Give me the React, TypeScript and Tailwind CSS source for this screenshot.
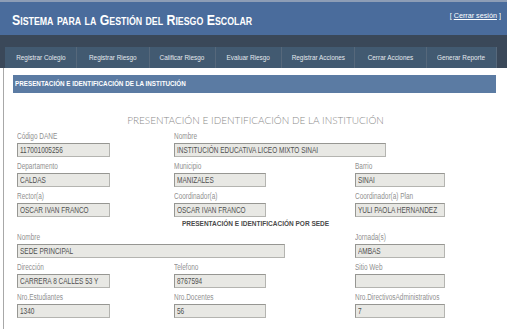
const navItems = [
  { label: "Registrar Colegio", w: "w-[72px]" },
  { label: "Registrar Riesgo", w: "w-[73px]" },
  { label: "Calificar Riesgo", w: "w-[66px]" },
  { label: "Evaluar Riesgo", w: "w-[66px]" },
  { label: "Registrar Acciones", w: "w-[73px]" },
  { label: "Cerrar Acciones", w: "w-[72px]" },
  { label: "Generar Reporte", w: "w-[70px]" },
]

const sans = "font-['Liberation_Sans',Arial,sans-serif]"

function Field({ label, value, width }: { label: string; value: string; width: string }) {
  return (
    <div className="flex flex-col">
      <span className={`h-[14px] whitespace-nowrap text-[8.5px] leading-[14px] text-[#909090] ${sans}`}>
        <span className="inline-block origin-left scale-x-[0.76]">{label}</span>
      </span>
      <div
        className={`h-[14px] ${width} overflow-hidden whitespace-nowrap border border-[#b4b4b0] border-t-[#969692] border-l-[#969692] bg-[#e8e8e4] px-[2px] text-[9px] leading-[12px] text-[#505050] ${sans}`}
      >
        <span className="inline-block origin-left scale-x-[0.72]">{value}</span>
      </div>
    </div>
  )
}

export default function App() {
  return (
    <div className="h-[329px] w-[507px] overflow-hidden bg-white">
      <header className="flex h-[35px] items-start justify-between border-t-2 border-[#8d9db6] bg-[#4a6c9c] pl-[12px] pr-[6px]">
        <h1
          className={`mt-[10px] whitespace-nowrap text-[14px] font-bold leading-[16px] text-white [font-variant:small-caps] ${sans}`}
        >
          <span className="inline-block origin-left scale-x-[0.88]">Sistema para la Gestión del Riesgo Escolar</span>
        </h1>
        <a className={`mt-[9px] whitespace-nowrap text-[8px] leading-[10px] text-white ${sans}`}>
          <span className="inline-block origin-right scale-x-[0.9]">
            [ <span className="underline">Cerrar sesión</span> ]
          </span>
        </a>
      </header>

      <nav className="flex bg-[#3a4859] pl-[5px] pr-[10px] pt-[12px]">
        {navItems.map((item) => (
          <div
            key={item.label}
            className={`flex h-[21px] ${item.w} items-center justify-center whitespace-nowrap border-r border-[#56687b] bg-[#425a71] text-[8px] text-[#e4e9ef] ${sans}`}
          >
            <span className="inline-block scale-x-[0.8]">{item.label}</span>
          </div>
        ))}
      </nav>

      <main className="ml-[3px] h-[261px] border-l border-[#a8a8a8] pt-[7px]">
        <div className="ml-[9px] flex h-[18px] w-[483px] items-center bg-[#5b7ba3] px-[2px]">
          <span className={`whitespace-nowrap text-[7.5px] font-bold text-white ${sans}`}>
            <span className="inline-block origin-left scale-x-[0.84]">
              PRESENTACIÓN E IDENTIFICACIÓN DE LA INSTITUCIÓN
            </span>
          </span>
        </div>

        <h2 className="mt-[19px] h-[17px] whitespace-nowrap text-center font-['Lato',sans-serif] text-[10px] font-light leading-[17px] text-[#8a8a8a]">
          PRESENTACIÓN E IDENTIFICACIÓN DE LA INSTITUCIÓN
        </h2>

        <div className="pl-[13px]">
          <div className="grid grid-cols-[157px_181px_1fr]">
            <Field label="Código DANE" value="117001005256" width="w-[93px]" />
            <div className="col-span-2">
              <Field label="Nombre" value="INSTITUCIÓN EDUCATIVA LICEO MIXTO SINAI" width="w-[212px]" />
            </div>
          </div>
          <div className="mt-[2px] grid grid-cols-[157px_181px_1fr]">
            <Field label="Departamento" value="CALDAS" width="w-[93px]" />
            <Field label="Municipio" value="MANIZALES" width="w-[92px]" />
            <Field label="Barrio" value="SINAI" width="w-[90px]" />
          </div>
          <div className="mt-[2px] grid grid-cols-[157px_181px_1fr]">
            <Field label="Rector(a)" value="OSCAR IVAN FRANCO" width="w-[93px]" />
            <Field label="Coordinador(a)" value="OSCAR IVAN FRANCO" width="w-[92px]" />
            <Field label="Coordinador(a) Plan" value="YULI PAOLA HERNANDEZ" width="w-[90px]" />
          </div>

          <p
            className={`h-[13px] whitespace-nowrap pr-[13px] text-center text-[6.5px] font-bold leading-[13px] text-[#4a4a4a] ${sans}`}
          >
            PRESENTACIÓN E IDENTIFICACIÓN POR SEDE
          </p>

          <div className="grid grid-cols-[157px_181px_1fr]">
            <div className="col-span-2">
              <Field label="Nombre" value="SEDE PRINCIPAL" width="w-[268px]" />
            </div>
            <Field label="Jornada(s)" value="AMBAS" width="w-[90px]" />
          </div>
          <div className="mt-[2px] grid grid-cols-[157px_181px_1fr]">
            <Field label="Dirección" value="CARRERA 8 CALLES 53 Y" width="w-[93px]" />
            <Field label="Telefono" value="8767594" width="w-[92px]" />
            <Field label="Sitio Web" value="" width="w-[90px]" />
          </div>
          <div className="mt-[2px] grid grid-cols-[157px_181px_1fr]">
            <Field label="Nro.Estudiantes" value="1340" width="w-[93px]" />
            <Field label="Nro.Docentes" value="56" width="w-[92px]" />
            <Field label="Nro.DirectivosAdministrativos" value="7" width="w-[90px]" />
          </div>
        </div>
      </main>
    </div>
  )
}
